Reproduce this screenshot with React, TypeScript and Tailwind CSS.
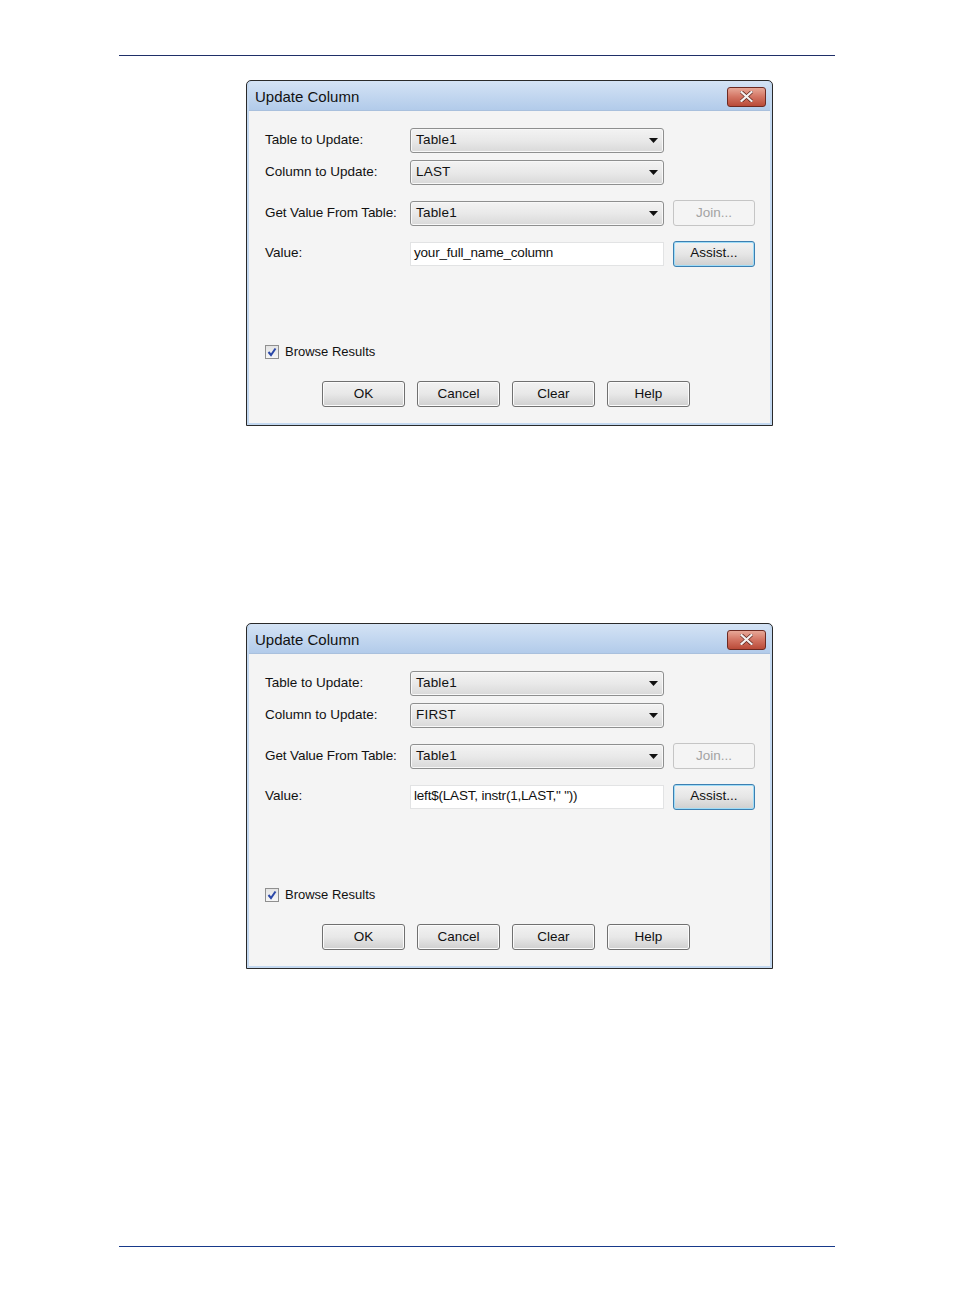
import React from "react";

const font = { fontFamily: '"Liberation Sans", Arial, sans-serif' };

function Arrow() {
  return (
    <svg width="9" height="5" viewBox="0 0 9 5" className="block">
      <path d="M0 0 L9 0 L4.5 5 Z" fill="#111" />
    </svg>
  );
}

function Combo({ value }: { value: string }) {
  return (
    <div className="w-[254px] h-[25px] rounded-[3px] border border-[#8e8f8f] bg-gradient-to-b from-[#f3f3f3] via-[#e9e9e9] to-[#d9d9d9] flex items-center pl-[5px] pr-[5px] shadow-[inset_0_0_0_1px_#f8f8f8]">
      <span className="flex-1 text-[13.5px] text-[#111] tracking-[0.2px]">{value}</span>
      <Arrow />
    </div>
  );
}

function Btn({ label, w = "w-[83px]", kind = "normal" }: { label: string; w?: string; kind?: "normal" | "disabled" | "focus" }) {
  const cls =
    kind === "disabled"
      ? "border-[#c5c5c5] bg-[#f4f4f4] text-[#a3a3a3]"
      : kind === "focus"
      ? "border-[#3c7fb1] bg-gradient-to-b from-[#f2f2f2] via-[#e6e6e6] to-[#cfcfcf] text-[#111] shadow-[inset_0_0_0_1px_#9fdcf7]"
      : "border-[#707070] bg-gradient-to-b from-[#f2f2f2] via-[#e8e8e8] to-[#cfcfcf] text-[#111] shadow-[inset_0_0_0_1px_#fbfbfb]";
  return (
    <div className={`${w} h-[26px] rounded-[3px] border ${cls} flex items-center justify-center text-[13.5px]`}>
      {label}
    </div>
  );
}

function Dialog({ column, value }: { column: string; value: string }) {
  return (
    <div className="ml-[246px] w-[527px] h-[346px] border border-[#2a2a2a] rounded-t-[5px] bg-[#c3d8f0] px-[2px] pb-[2px] flex flex-col" style={font}>
      <div className="h-[29px] flex items-center justify-between pl-[6px] pr-[4px] bg-gradient-to-b from-[#d4e3f5] to-[#b2cbea] rounded-t-[4px]">
        <span className="text-[15px] text-[#111] pt-[3px]">Update Column</span>
        <div className="w-[39px] h-[20px] mt-[2px] rounded-[3px] border border-[#6d2a22] bg-gradient-to-b from-[#e7a898] via-[#d27362] to-[#b94a38] flex items-center justify-center">
          <svg width="13" height="11" viewBox="0 0 13 11">
            <path d="M1.5 1 L11.5 10 M11.5 1 L1.5 10" stroke="#5a2018" strokeWidth="3.6" strokeLinecap="square" />
            <path d="M1.5 1 L11.5 10 M11.5 1 L1.5 10" stroke="#f4f0f0" strokeWidth="2.2" strokeLinecap="square" />
          </svg>
        </div>
      </div>
      <div className="flex-1 bg-[#f4f4f4] border-t border-[#a9c0dd] pl-[16px] flex flex-col text-[13.5px] text-[#111]">
        <div className="mt-[17px] flex items-center h-[25px]">
          <span className="w-[145px]">Table to Update:</span>
          <Combo value="Table1" />
        </div>
        <div className="mt-[7px] flex items-center h-[25px]">
          <span className="w-[145px]">Column to Update:</span>
          <Combo value={column} />
        </div>
        <div className="mt-[16px] flex items-center h-[25px]">
          <span className="w-[145px] tracking-[-0.1px]">Get Value From Table:</span>
          <Combo value="Table1" />
          <div className="ml-[9px] -mt-[1px]">
            <Btn label="Join..." w="w-[82px]" kind="disabled" />
          </div>
        </div>
        <div className="mt-[15px] flex items-center h-[25px]">
          <span className="w-[145px]">Value:</span>
          <div className="w-[254px] h-[24px] bg-white border border-[#e2e3e4] flex items-center pl-[3px] text-[13.5px] tracking-[-0.2px]">
            {value}
          </div>
          <div className="ml-[9px]">
            <Btn label="Assist..." w="w-[82px]" kind="focus" />
          </div>
        </div>
        <div className="mt-[78px] flex items-center h-[15px]">
          <div className="w-[14px] h-[14px] border border-[#8f8f8f] bg-gradient-to-b from-[#e4e4e4] to-[#f6f6f6] flex items-center justify-center">
            <svg width="10" height="10" viewBox="0 0 10 10">
              <path d="M1.5 5 L4 8 L8.5 1.5" stroke="#2b48a8" strokeWidth="2" fill="none" />
            </svg>
          </div>
          <span className="ml-[6px] text-[13px]">Browse Results</span>
        </div>
        <div className="mt-[22px] ml-[57px] flex gap-[12px]">
          <Btn label="OK" />
          <Btn label="Cancel" />
          <Btn label="Clear" />
          <Btn label="Help" />
        </div>
      </div>
    </div>
  );
}

export default function App() {
  return (
    <div className="w-[954px] h-[1312px] bg-white pt-[55px]">
      <div className="ml-[119px] w-[716px] h-px bg-[#1f2f68]" />
      <div className="mt-[24px]">
        <Dialog column="LAST" value="your_full_name_column" />
      </div>
      <div className="mt-[197px]">
        <Dialog column="FIRST" value={'left$(LAST, instr(1,LAST," "))'} />
      </div>
      <div className="mt-[277px] ml-[119px] w-[716px] h-px bg-[#17398a]" />
    </div>
  );
}
